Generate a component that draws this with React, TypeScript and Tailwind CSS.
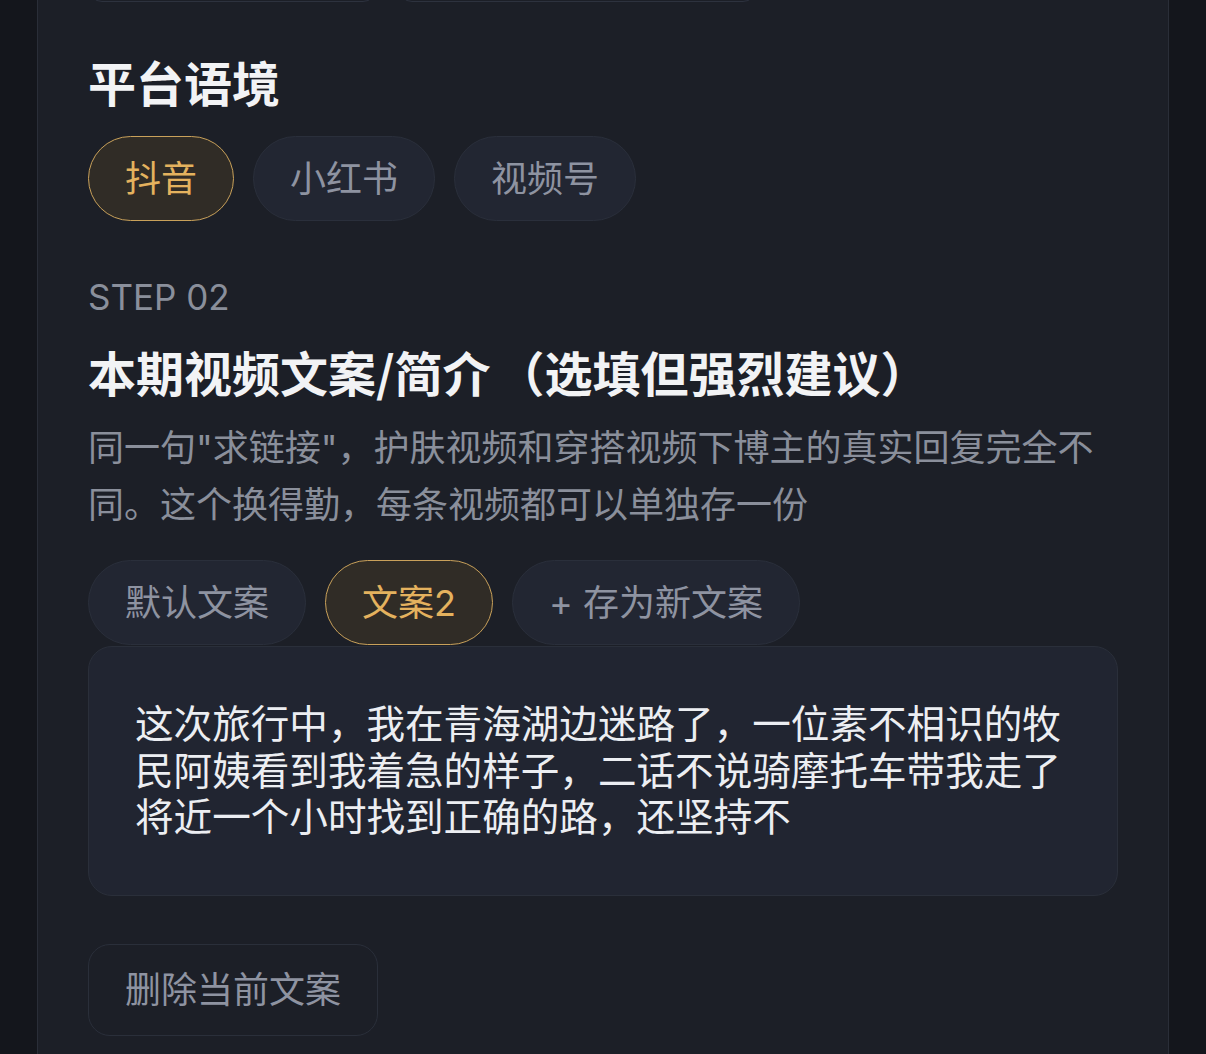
import { useState } from "react";

const platforms = ["抖音", "小红书", "视频号"];

const Pill = ({
  label,
  active,
  onClick,
}: {
  label: string;
  active?: boolean;
  onClick?: () => void;
}) => (
  <button
    onClick={onClick}
    className={`flex h-[85px] items-center rounded-full border px-[36px] text-[36px] leading-none ${
      active
        ? "border-[#c9a15a] bg-[#302c26] text-[#e4b25e]"
        : "border-[#2a2f3b] bg-[#222632] text-[#8e93a1]"
    }`}
  >
    {label}
  </button>
);

const App = () => {
  const [platform, setPlatform] = useState("抖音");
  const [drafts] = useState(["默认文案", "文案2"]);
  const [current, setCurrent] = useState("文案2");
  const [text, setText] = useState(
    "这次旅行中，我在青海湖边迷路了，一位素不相识的牧民阿姨看到我着急的样子，二话不说骑摩托车带我走了将近一个小时找到正确的路，还坚持不"
  );

  return (
    <div
      lang="zh-CN"
      className="h-[1054px] overflow-hidden bg-[#14161c] font-['Inter','Noto_Sans_CJK_SC',sans-serif]"
    >
      <div className="ml-[37px] w-[1132px] border-x border-[#2a2e38] bg-[#1c1f27] px-[50px] pb-[40px]">
        {/* previous step buttons, cut off at the top */}
        <div className="-mt-[58px] flex gap-[21px]">
          <div className="h-[60px] w-[289px] rounded-[14px] border border-[#2d323e] bg-[#1c1f27]" />
          <div className="h-[60px] w-[359px] rounded-[14px] border border-[#2d323e] bg-[#1c1f27]" />
        </div>

        <h2 className="mt-[55px] text-[48px] font-bold leading-[56px] text-[#f2f3f5]">平台语境</h2>
        <div className="mt-[23px] flex gap-[19px]">
          {platforms.map((p) => (
            <Pill key={p} label={p} active={platform === p} onClick={() => setPlatform(p)} />
          ))}
        </div>

        <div className="mt-[54px] text-[35px] leading-[44px] text-[#8a8f9b]">STEP 02</div>
        <h2 className="mt-[24px] font-['Noto_Sans_CJK_SC',sans-serif] text-[48px] font-bold leading-[56px] text-[#f2f3f5]">
          本期视频文案/简介<span className="ml-[6px]">（</span>选填但强烈建议）
        </h2>
        <p className="mt-[21px] text-[36px] leading-[57px] text-[#8a8f9b]">
          同一句"求链接"，护肤视频和穿搭视频下博主的真实回复完全不同。这个换得勤，每条视频都可以单独存一份
        </p>

        <div className="mt-[26px] flex gap-[19px]">
          {drafts.map((d) => (
            <Pill key={d} label={d} active={current === d} onClick={() => setCurrent(d)} />
          ))}
          <Pill label="+ 存为新文案" />
        </div>

        <textarea
          value={text}
          onChange={(e) => setText(e.target.value)}
          className="mt-px block h-[250px] w-full resize-none rounded-[24px] border border-[#2a2f3a] bg-[#212531] px-[46px] py-[54px] text-[38.6px] leading-[46.5px] text-[#eceef2] outline-none"
        />

        <button className="mt-[48px] flex h-[92px] items-center rounded-[22px] border border-[#2a2f3a] bg-[#1c1f27] px-[36px] text-[36px] text-[#8e93a1]">
          删除当前文案
        </button>
      </div>
    </div>
  );
};

export default App;
